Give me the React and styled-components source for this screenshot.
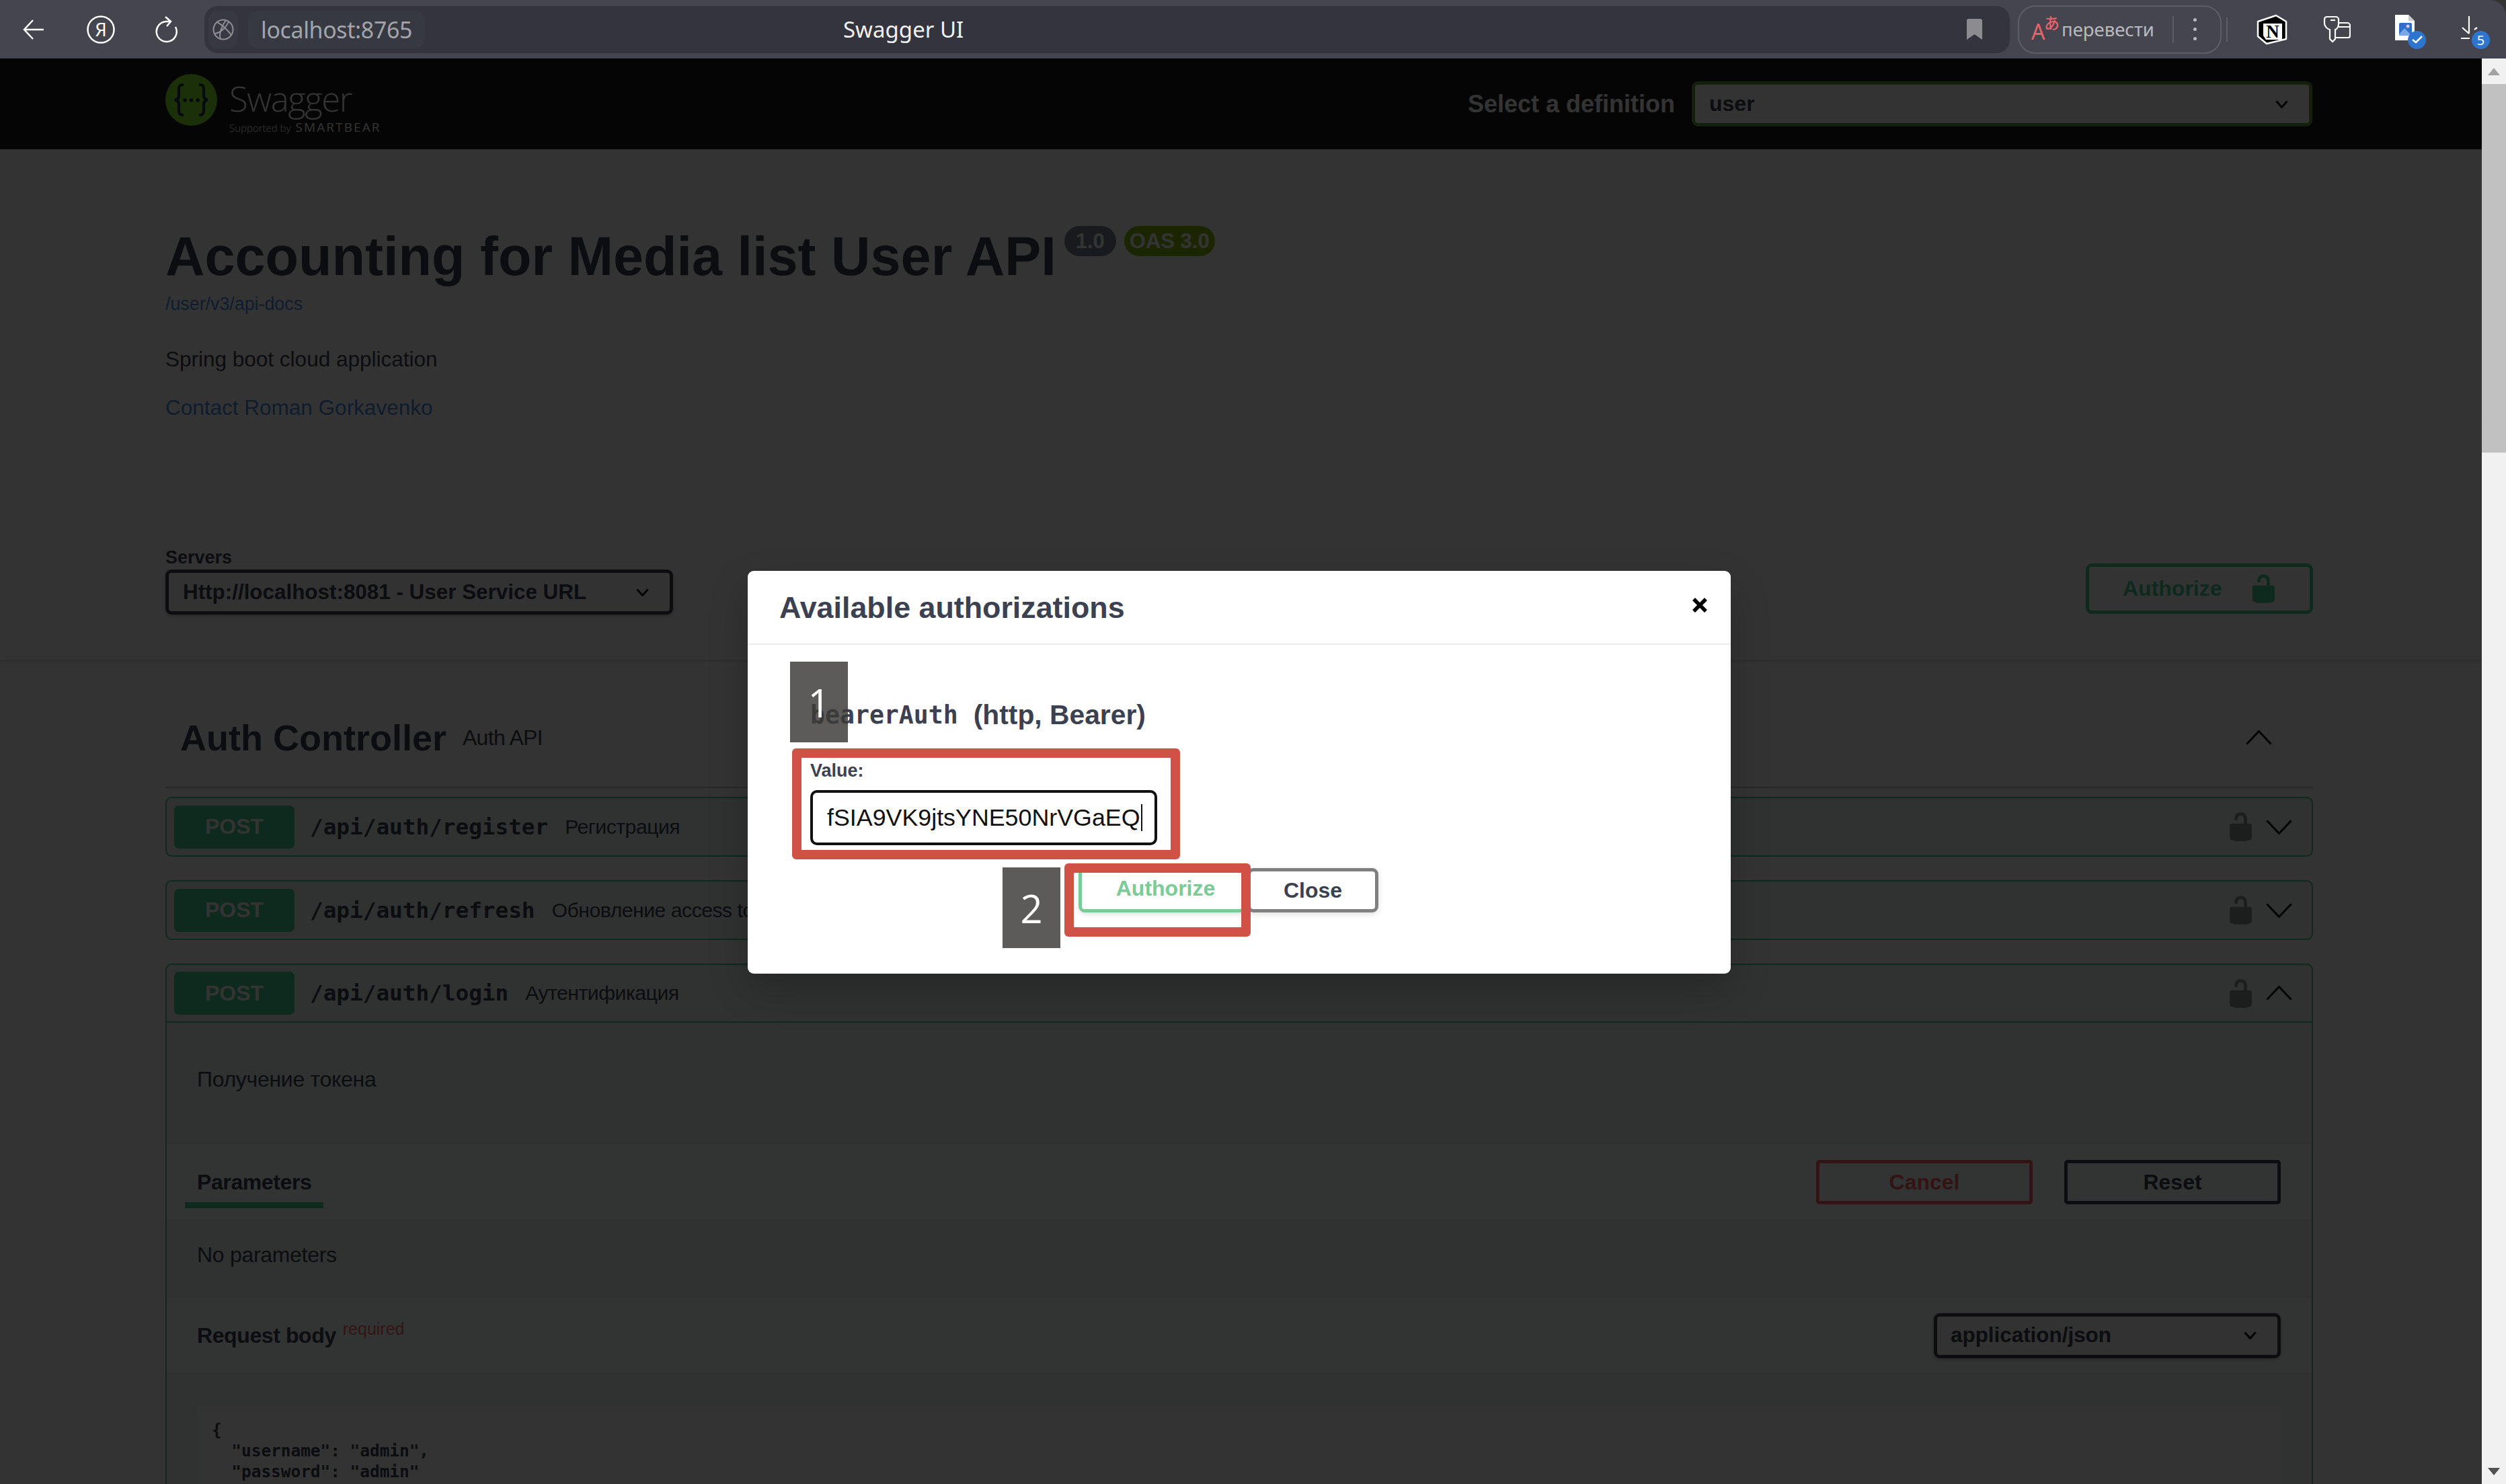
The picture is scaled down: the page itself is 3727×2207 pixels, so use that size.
import React from 'react';
import styled, { createGlobalStyle } from 'styled-components';

const GlobalStyle = createGlobalStyle`
  html, body {
    margin: 0;
    padding: 0;
    background: #333;
    overflow: hidden;
  }
  * {
    box-sizing: border-box;
  }
`;

const SANS = `'Liberation Sans', Arial, sans-serif`;
const MONO = `'DejaVu Sans Mono', monospace`;

const Shell = styled.div`
  width: 3727px;
  height: 2207px;
  display: flex;
  flex-direction: column;
  overflow: hidden;
  font-family: ${SANS};
`;

/* browser chrome */
const Toolbar = styled.header`
  height: 87px;
  flex: none;
  display: flex;
  align-items: center;
  background: #44454f;
  border-top-right-radius: 24px;
  padding: 0 0 0 34px;
`;

const ToolIcon = styled.svg`
  flex: none;
  display: block;
  margin-left: ${(p) => p.$ml || 0}px;
`;

const UrlBar = styled.div`
  width: 2685px;
  height: 70px;
  margin-left: 39px;
  flex: none;
  display: flex;
  align-items: center;
  padding: 0 41px 0 6px;
  background: #33343d;
  border-radius: 20px;
`;

const UrlChip = styled.div`
  height: 56px;
  display: flex;
  align-items: center;
  justify-content: center;
  padding: 0 ${(p) => p.$pad}px;
  margin-left: ${(p) => p.$ml || 0}px;
  background: #373942;
  border-radius: 14px;
`;

const UrlText = styled.span`
  font-family: 'Noto Sans', sans-serif;
  font-size: 33.8px;
  color: #a4a5aa;
  letter-spacing: -0.3px;
`;

const TabTitle = styled.span`
  margin-left: 622px;
  font-family: 'Noto Sans', sans-serif;
  font-size: 33px;
  color: #f1f1f3;
  white-space: nowrap;
`;

const Spacer = styled.div`
  flex: 1;
`;

const TranslateChip = styled.div`
  width: 303px;
  height: 72px;
  margin-left: 12px;
  flex: none;
  display: flex;
  align-items: center;
  padding-left: 18px;
  border: 2px solid #5c5d67;
  border-radius: 26px;
`;

const TranslateMark = styled.div`
  width: 42px;
  height: 38px;
  flex: none;
  display: flex;
  justify-content: space-between;
  color: #e8636b;
  line-height: 1;

  span {
    font-family: 'Noto Sans', sans-serif;
    font-size: 32px;
    align-self: flex-end;
    margin-right: -6px;
  }

  b {
    font-family: 'Noto Sans CJK JP', sans-serif;
    font-size: 23px;
    font-weight: 500;
    align-self: flex-start;
    margin-top: -3px;
  }
`;

const TranslateText = styled.span`
  margin-left: 3px;
  font-family: 'Noto Sans', sans-serif;
  font-size: 27.5px;
  color: #b9babd;
  white-space: nowrap;
`;

const VDivider = styled.div`
  flex: none;
  width: 2px;
  height: ${(p) => p.$h}px;
  margin-left: ${(p) => p.$ml}px;
  background: #5c5d67;
`;

const Kebab = styled.div`
  flex: none;
  margin-left: 29px;
  display: flex;
  flex-direction: column;
  gap: 9px;

  i {
    display: block;
    width: 5px;
    height: 5px;
    border-radius: 50%;
    background: #b9babd;
  }
`;

const IconBadge = styled.span`
  position: absolute;
  left: ${(p) => p.$left}px;
  top: ${(p) => p.$top}px;
  width: 27px;
  height: 27px;
  border-radius: 50%;
  background: #2e75d0;
  color: #fff;
  display: flex;
  align-items: center;
  justify-content: center;
  font-family: 'Noto Sans', sans-serif;
  font-size: 20px;
`;

const BadgeHost = styled.div`
  position: relative;
  flex: none;
  margin-left: ${(p) => p.$ml}px;
  width: ${(p) => p.$w}px;
  height: 44px;
`;

/* page under the dialog */
const Viewport = styled.div`
  flex: 1;
  min-height: 0;
  display: flex;
`;

const Page = styled.main`
  position: relative;
  width: 3691px;
  flex: none;
  overflow: hidden;
  background: #fff;
  color: #3b4151;
`;

const Scrollbar = styled.aside`
  width: 36px;
  flex: none;
  display: flex;
  flex-direction: column;
  background: #f1f1f1;
`;

const ScrollButton = styled.div`
  height: 38px;
  display: flex;
  align-items: center;
  justify-content: center;

  &::before {
    content: '';
    border-left: 9px solid transparent;
    border-right: 9px solid transparent;
    ${(p) => (p.$down ? 'border-top: 11px solid #505050;' : 'border-bottom: 11px solid #a3a3a3;')}
  }
`;

const ScrollThumb = styled.div`
  height: 548px;
  background: #c1c1c1;
`;

const Topbar = styled.div`
  height: 135px;
  display: flex;
  align-items: center;
  padding: 0 252px 0 246px;
  background: #1b1b1b;
`;

const Logo = styled.div`
  display: flex;
  align-items: flex-start;
  gap: 18px;
`;

const LogoWords = styled.div`
  display: flex;
  flex-direction: column;
  color: #fff;
  font-family: 'Open Sans', sans-serif;
`;

const LogoName = styled.span`
  font-size: 51px;
  font-weight: 300;
  line-height: 66px;
  padding-top: 4px;
  letter-spacing: -1.5px;
`;

const LogoSupport = styled.span`
  display: flex;
  align-items: baseline;
  gap: 7px;
  font-size: 15px;
  line-height: 20px;
  font-weight: 300;

  b {
    font-size: 19px;
    font-weight: 400;
    letter-spacing: 2.1px;
  }
`;

const DefinitionPicker = styled.div`
  margin-left: auto;
  display: flex;
  align-items: center;
  gap: 25px;
`;

const DefinitionLabel = styled.span`
  font-size: 36px;
  font-weight: 700;
  color: #fff;
`;

const SelectBox = styled.div`
  width: ${(p) => p.$w}px;
  height: 67px;
  flex: none;
  display: flex;
  align-items: center;
  justify-content: space-between;
  padding: 0 ${(p) => p.$right || 29}px 0 ${(p) => p.$left || 21}px;
  border: 5px solid ${(p) => p.$border || '#41444e'};
  border-radius: 9px;
  background: ${(p) => p.$bg || '#f7f7f7'};
  box-shadow: 0 2px 5px rgba(0, 0, 0, 0.25);
  font-size: ${(p) => p.$size || 31.4}px;
  font-weight: 700;
  color: #3b4151;
  white-space: nowrap;
`;

const Info = styled.section`
  padding: 115px 252px 0 246px;
`;

const Title = styled.h2`
  margin: 0;
  display: flex;
  align-items: flex-start;
  font-size: 81px;
  line-height: 88px;
  font-weight: 700;
  color: #3b4151;
  white-space: nowrap;
`;

const Version = styled.small`
  height: 45px;
  margin: -1px 0 0 ${(p) => p.$ml}px;
  padding: 0 ${(p) => p.$pad}px;
  display: flex;
  align-items: center;
  border-radius: 24px;
  background: ${(p) => p.$bg};
  color: #fff;
  font-size: 31px;
  line-height: 45px;
  font-weight: 700;
`;

const DocsLink = styled.div`
  margin-top: 10px;
  font-size: 26.8px;
  line-height: 34px;
  color: #4990e2;
`;

const Description = styled.p`
  margin: ${(p) => p.$mt}px 0 0;
  font-size: 31.5px;
  line-height: 34px;
  color: ${(p) => p.$color || '#3b4151'};
`;

const SchemeRow = styled.section`
  height: 358px;
  padding: 0 251px 67px 246px;
  display: flex;
  align-items: flex-end;
  justify-content: space-between;
  background: #fff;
  box-shadow: 0 2px 5px rgba(0, 0, 0, 0.15);
`;

const ServersLabel = styled.div`
  font-size: 27px;
  font-weight: 700;
  line-height: 34px;
  margin-bottom: 1px;
`;

const AuthorizeOpen = styled.button`
  width: 338px;
  height: 75px;
  margin-bottom: 1px;
  display: flex;
  align-items: center;
  justify-content: space-between;
  padding: 0 45px 0 50px;
  background: transparent;
  border: 5px solid #49cc90;
  border-radius: 9px;
  color: #49cc90;
  font-family: ${SANS};
  font-size: 32px;
  font-weight: 700;
`;

const Tag = styled.section`
  padding: 0 251px 0 246px;
`;

const TagHeader = styled.div`
  height: 191px;
  padding: 43px 61px 0 22px;
  display: flex;
  align-items: center;
  border-bottom: 2px solid rgba(59, 65, 81, 0.3);
`;

const TagName = styled.h3`
  margin: 0;
  font-size: 54px;
  font-weight: 700;
  color: #3b4151;
`;

const TagNote = styled.span`
  margin-left: 24px;
  font-size: 32px;
  color: #3b4151;
  letter-spacing: -0.7px;
`;

const OpList = styled.div`
  margin-top: 13px;
  display: flex;
  flex-direction: column;
  gap: 35px;
`;

const OpBlock = styled.article`
  border: 2px solid #49cc90;
  border-radius: 9px;
  background: rgba(73, 204, 144, 0.1);
`;

const OpHeader = styled.div`
  height: ${(p) => (p.$open ? 86 : 85)}px;
  display: flex;
  align-items: center;
  padding: 0 29px 0 11px;
  border-bottom: ${(p) => (p.$open ? '2px solid #49cc90' : 'none')};
`;

const Method = styled.span`
  width: 179px;
  height: 64px;
  flex: none;
  display: flex;
  align-items: center;
  justify-content: center;
  border-radius: 7px;
  background: #49cc90;
  color: #fff;
  font-size: 32px;
  font-weight: 700;
`;

const OpPath = styled.span`
  margin-left: 23px;
  font-family: ${MONO};
  font-size: 32.7px;
  font-weight: 700;
  color: #3b4151;
`;

const OpSummary = styled.span`
  margin-left: 25px;
  font-size: 30.2px;
  color: #3b4151;
  letter-spacing: -0.5px;
`;

const OpIcons = styled.div`
  margin-left: auto;
  display: flex;
  align-items: center;
  gap: 14px;
`;

const OpLock = styled.svg`
  width: 47px;
  height: 47px;
  fill: #000;
  opacity: 0.4;
`;

const OpDescription = styled.p`
  height: 181px;
  margin: 0;
  padding: 67px 0 0 45px;
  font-size: 32px;
  line-height: 34px;
  letter-spacing: -0.3px;
`;

const SectionHeader = styled.div`
  height: ${(p) => p.$h}px;
  padding: 0 46px 0 45px;
  display: flex;
  align-items: center;
  justify-content: space-between;
  background: rgba(255, 255, 255, 0.8);
  box-shadow: 0 1px 2px rgba(0, 0, 0, 0.1);
`;

const TabLabel = styled.div`
  position: relative;
  font-size: 32px;
  font-weight: 700;
  letter-spacing: -0.4px;

  &::after {
    content: '';
    position: absolute;
    left: -18px;
    right: -18px;
    top: 48px;
    height: 9px;
    background: #49cc90;
  }
`;

const TryActions = styled.div`
  display: flex;
  gap: 47px;
`;

const ActionButton = styled.button`
  width: 322px;
  height: 66px;
  background: transparent;
  border: 5px solid ${(p) => p.$color};
  border-radius: 5px;
  color: ${(p) => p.$color};
  font-family: ${SANS};
  font-size: 32px;
  font-weight: 700;
`;

const NoParams = styled.p`
  height: 116px;
  margin: 0;
  padding: 35px 0 0 45px;
  font-size: 32px;
  line-height: 34px;
  letter-spacing: -0.3px;
`;

const BodyLabel = styled.div`
  display: flex;
  align-items: flex-start;
  font-size: 32px;
  font-weight: 700;
  letter-spacing: -0.4px;

  small {
    margin: -6px 0 0 10px;
    font-size: 25px;
    font-weight: 400;
    color: rgba(255, 0, 0, 0.6);
    letter-spacing: 0;
  }
`;

const BodyWrap = styled.div`
  padding: 48px 46px 0;
`;

const CodeBlock = styled.pre`
  margin: 0;
  height: 300px;
  padding: 21px 21px;
  border-radius: 5px;
  background: #fff;
  font-family: ${MONO};
  font-size: 24.4px;
  line-height: 31px;
  font-weight: 700;
  color: #3b4151;
`;

/* auth dialog */
const Overlay = styled.div`
  position: absolute;
  inset: 0;
  background: rgba(0, 0, 0, 0.8);
`;

const Modal = styled.div`
  position: absolute;
  left: 1112px;
  top: 762px;
  width: 1462px;
  height: 599px;
  border-radius: 9px;
  background: #fff;
  box-shadow: 0 24px 60px rgba(0, 0, 0, 0.2);
  color: #3b4151;
`;

const ModalHeader = styled.div`
  height: 110px;
  padding: 0 34px 0 47px;
  display: flex;
  align-items: center;
  justify-content: space-between;
  border-bottom: 2px solid #ebebeb;
`;

const ModalTitle = styled.h3`
  margin: 0;
  font-size: 44.8px;
  font-weight: 700;
`;

const CloseIcon = styled.svg`
  margin-bottom: 6px;
`;

const ModalBody = styled.div`
  padding: 82px 0 0 93px;
`;

const SchemeHeading = styled.h4`
  margin: 0;
  height: 44px;
  display: flex;
  align-items: center;
  font-size: 40.8px;
  font-weight: 700;

  code {
    font-family: ${MONO};
    font-size: 36.5px;
    margin-right: 23px;
  }
`;

const ValueLabel = styled.label`
  display: block;
  margin-top: 46px;
  font-size: 27px;
  line-height: 30px;
  font-weight: 700;
`;

const TokenField = styled.div`
  width: 516px;
  height: 82px;
  margin-top: 14px;
  display: flex;
  align-items: center;
  padding-left: 21px;
  border: 4px solid #111;
  border-radius: 10px;
  color: #111;
  font-size: 35.8px;
  white-space: nowrap;

  &::after {
    content: '';
    width: 2px;
    height: 40px;
    margin-left: 1px;
    background: #111;
  }
`;

const AuthActions = styled.div`
  margin: 34px 0 0 399px;
  display: flex;
`;

const DoneButton = styled.button`
  width: ${(p) => p.$w}px;
  height: 66px;
  padding: 0;
  background: #fff;
  border: 5px solid ${(p) => p.$color};
  border-radius: 9px;
  box-shadow: 0 3px 8px rgba(0, 0, 0, 0.12);
  color: ${(p) => p.$text};
  font-family: ${SANS};
  font-size: 32px;
  font-weight: 700;

  span {
    position: relative;
    top: ${(p) => p.$shift || 0}px;
    left: ${(p) => p.$nudge || 0}px;
  }
`;

const StepBadge = styled.div`
  position: absolute;
  left: ${(p) => p.$left}px;
  top: ${(p) => p.$top}px;
  width: 86px;
  height: 120px;
  display: flex;
  align-items: center;
  justify-content: center;
  background: rgba(60, 58, 55, 0.83);
  color: #fff;
  font-family: 'Open Sans', sans-serif;
  font-size: 58px;
`;

const RedFrame = styled.div`
  position: absolute;
  left: ${(p) => p.$left}px;
  top: ${(p) => p.$top}px;
  width: ${(p) => p.$w}px;
  height: ${(p) => p.$h}px;
  border: 14px solid #d05246;
  border-radius: 6px;
`;

const Chevron = ({ up, w = 39, h = 22, sw = 3, color = '#000' }) => (
  <svg width={w} height={h} viewBox={`0 0 ${w} ${h}`} fill="none" style={{ flex: 'none', display: 'block' }}>
    <polyline
      points={up ? `1.5,${h - 1.5} ${w / 2},1.5 ${w - 1.5},${h - 1.5}` : `1.5,1.5 ${w / 2},${h - 1.5} ${w - 1.5},1.5`}
      stroke={color}
      strokeWidth={sw}
    />
  </svg>
);

const UNLOCK =
  'M15.8 8H14V5.6C14 2.703 12.665 1 10 1 7.334 1 6 2.703 6 5.6V6h2v-.801C8 3.754 8.797 3 10 3c1.203 0 2 .754 2 2.199V8H4c-.553 0-1 .646-1 1.199V17c0 .549.428 1.139.951 1.307l1.197.387C5.672 18.861 6.55 19 7.1 19h5.8c.549 0 1.428-.139 1.951-.307l1.196-.387c.524-.167.953-.757.953-1.306V9.199C17 8.646 16.352 8 15.8 8z';

const SwaggerMark = () => (
  <svg width="77" height="77" viewBox="0 0 77 77" style={{ marginTop: 1 }}>
    <circle cx="38.5" cy="38.5" r="38.5" fill="#85ea2d" />
    <g fill="none" stroke="#173647" strokeWidth="4">
      <path d="M27 16c-7 0-7 3-7 8v8c0 4-2 6-6 6.500 4 .5 6 2.500 6 6.500v8c0 5 0 8 7 8" />
      <path d="M50 16c7 0 7 3 7 8v8c0 4 2 6 6 6.500-4 .5-6 2.500-6 6.500v8c0 5 0 8-7 8" />
    </g>
    <g fill="#173647">
      <circle cx="29" cy="39" r="2.800" />
      <circle cx="38.500" cy="39" r="2.800" />
      <circle cx="48" cy="39" r="2.800" />
    </g>
  </svg>
);

const BrowserBar = () => (
  <Toolbar>
    <ToolIcon width="32" height="32" viewBox="0 0 32 32" fill="none" stroke="#fff" strokeWidth="2.500">
      <path d="M31 16H2M15 2 2 16l13 14" />
    </ToolIcon>
    <ToolIcon $ml={63} width="42" height="42" viewBox="0 0 42 42" fill="none">
      <circle cx="21" cy="21" r="19.500" stroke="#fff" strokeWidth="2.500" />
      <text x="21" y="31" textAnchor="middle" fontFamily="'Noto Sans', sans-serif" fontSize="27" fill="#fff">Я</text>
    </ToolIcon>
    <ToolIcon $ml={60} width="34" height="40" viewBox="0 0 34 40" fill="none" stroke="#fff" strokeWidth="2.500">
      <path d="M30 16a15 15 0 1 1-14-8h6M15 1l8 7-6 7" />
    </ToolIcon>
    <UrlBar>
      <UrlChip $pad={6}>
        <svg width="32" height="32" viewBox="0 0 32 32" fill="none" stroke="#8e8f94" strokeWidth="2">
          <circle cx="16" cy="16" r="14.500" />
          <path d="M3 22c8-1 17-8 21-18M7 5c6 3 16 12 21 19M12 30c-3-7 2-20 8-28" />
        </svg>
      </UrlChip>
      <UrlChip $pad={19} $ml={15}>
        <UrlText>localhost:8765</UrlText>
      </UrlChip>
      <TabTitle>Swagger UI</TabTitle>
      <Spacer />
      <svg width="23" height="31" viewBox="0 0 23 31">
        <path d="M3 0h17a3 3 0 0 1 3 3v28l-11.500-8L0 31V3a3 3 0 0 1 3-3z" fill="#8b8b90" />
      </svg>
    </UrlBar>
    <TranslateChip>
      <TranslateMark>
        <span>A</span>
        <b>あ</b>
      </TranslateMark>
      <TranslateText>перевести</TranslateText>
      <VDivider $h={40} $ml={27} />
      <Kebab><i /><i /><i /></Kebab>
    </TranslateChip>
    <VDivider $h={36} $ml={7} />
    <ToolIcon $ml={43} width="46" height="46" viewBox="0 0 46 46">
      <path d="M2 11 29 2l15 9v26l-29 7-13-11z" fill="#000" stroke="#fff" strokeWidth="2.500" strokeLinejoin="round" />
      <path d="M10 14h28v24H14l-4-6z" fill="#fff" />
      <text x="24" y="35" textAnchor="middle" fontFamily="'Liberation Serif', serif" fontWeight="700" fontSize="27" fill="#000">N</text>
    </ToolIcon>
    <ToolIcon $ml={52} width="42" height="42" viewBox="0 0 42 42" fill="none" stroke="#fff" strokeWidth="2.200">
      <path d="M6 2h14a4 4 0 0 1 4 4v6c0 4-2 8-5 9v14l-4 4-4-4V21c-4-1-8-5-8-9V6a4 4 0 0 1 3-4z" />
      <path d="M12 7h7" />
      <path d="M24 11h13a4 4 0 0 1 4 4v15a3 3 0 0 1-3 3H20M24 17h17" />
    </ToolIcon>
    <BadgeHost $ml={66} $w={32}>
      <svg width="30" height="38" viewBox="0 0 30 38">
        <path d="M0 0h20l9 9v29H0z" fill="#fff" />
        <path d="M20 0v9h9z" fill="#c8c8cc" />
        <rect x="6" y="12" width="19" height="19" rx="2" fill="#2f6fc9" />
        <path d="M6 29l8-9 8 8v3H6z" fill="#79a7e8" />
        <circle cx="19" cy="17" r="2.500" fill="#d9c6f2" />
      </svg>
      <IconBadge $left={19} $top={24}>
        <svg width="16" height="12" viewBox="0 0 16 12" fill="none" stroke="#fff" strokeWidth="2.500">
          <path d="M1 6l5 4 9-9" />
        </svg>
      </IconBadge>
    </BadgeHost>
    <BadgeHost $ml={65} $w={30}>
      <svg width="26" height="36" viewBox="0 0 26 36" fill="none" stroke="#fff" strokeWidth="2.200" style={{ marginTop: 2 }}>
        <path d="M13 0v26M3 17l10 9M1 33h13M21 20l4-3" />
      </svg>
      <IconBadge $left={17} $top={24}>5</IconBadge>
    </BadgeHost>
  </Toolbar>
);

const ops = [
  { path: '/api/auth/register', summary: 'Регистрация' },
  { path: '/api/auth/refresh', summary: 'Обновление access token' },
];

const OpRow = ({ path, summary, open }) => (
  <OpHeader $open={open}>
    <Method>POST</Method>
    <OpPath>{path}</OpPath>
    <OpSummary>{summary}</OpSummary>
    <OpIcons>
      <OpLock viewBox="0 0 20 20"><path d={UNLOCK} /></OpLock>
      <Chevron up={open} />
    </OpIcons>
  </OpHeader>
);

const App = () => {
  return (
    <Shell>
      <GlobalStyle />
      <BrowserBar />
      <Viewport>
        <Page>
          <Topbar>
            <Logo>
              <SwaggerMark />
              <LogoWords>
                <LogoName>Swagger</LogoName>
                <LogoSupport>Supported by <b>SMARTBEAR</b></LogoSupport>
              </LogoWords>
            </Logo>
            <DefinitionPicker>
              <DefinitionLabel>Select a definition</DefinitionLabel>
              <SelectBox $w={923} $border="#62a03f" $bg="#fff" $size={32} $right={31}>
                user
                <Chevron w={19} h={12} />
              </SelectBox>
            </DefinitionPicker>
          </Topbar>

          <Info>
            <Title>
              Accounting for Media list User API
              <Version $ml={12} $pad={17} $bg="#7d8492">1.0</Version>
              <Version $ml={12} $pad={8} $bg="#89bf04">OAS 3.0</Version>
            </Title>
            <DocsLink>/user/v3/api-docs</DocsLink>
            <Description $mt={48}>Spring boot cloud application</Description>
            <Description $mt={38} $color="#4990e2">Contact Roman Gorkavenko</Description>
          </Info>

          <SchemeRow>
            <div>
              <ServersLabel>Servers</ServersLabel>
              <SelectBox $w={755} $left={21} $right={31}>
                Http://localhost:8081 - User Service URL
                <Chevron w={19} h={12} />
              </SelectBox>
            </div>
            <AuthorizeOpen>
              Authorize
              <svg width="47" height="47" viewBox="0 0 20 20" fill="#49cc90"><path d={UNLOCK} /></svg>
            </AuthorizeOpen>
          </SchemeRow>

          <Tag>
            <TagHeader>
              <TagName>Auth Controller</TagName>
              <TagNote>Auth API</TagNote>
              <OpIcons>
                <Chevron up />
              </OpIcons>
            </TagHeader>
            <OpList>
              {ops.map((op) => (
                <OpBlock key={op.path}>
                  <OpRow path={op.path} summary={op.summary} />
                </OpBlock>
              ))}
              <OpBlock>
                <OpRow path="/api/auth/login" summary="Аутентификация" open />
                <OpDescription>Получение токена</OpDescription>
                <SectionHeader $h={112}>
                  <TabLabel>Parameters</TabLabel>
                  <TryActions>
                    <ActionButton $color="#ff6060">Cancel</ActionButton>
                    <ActionButton $color="#3b4151">Reset</ActionButton>
                  </TryActions>
                </SectionHeader>
                <NoParams>No parameters</NoParams>
                <SectionHeader $h={112}>
                  <BodyLabel>Request body <small>required</small></BodyLabel>
                  <SelectBox $w={516} $left={20} $right={31}>
                    application/json
                    <Chevron w={19} h={12} />
                  </SelectBox>
                </SectionHeader>
                <BodyWrap>
                  <CodeBlock>{`{
  "username": "admin",
  "password": "admin"
}`}</CodeBlock>
                </BodyWrap>
              </OpBlock>
            </OpList>
          </Tag>

          <Overlay>
            <Modal>
              <ModalHeader>
                <ModalTitle>Available authorizations</ModalTitle>
                <CloseIcon width="24" height="24" viewBox="0 0 24 24" fill="none" stroke="#000" strokeWidth="5.500">
                  <path d="M3 3l18 18M21 3 3 21" />
                </CloseIcon>
              </ModalHeader>
              <ModalBody>
                <SchemeHeading><code>bearerAuth</code>(http, Bearer)</SchemeHeading>
                <ValueLabel>Value:</ValueLabel>
                <TokenField>fSIA9VK9jtsYNE50NrVGaEQ</TokenField>
                <AuthActions>
                  <DoneButton $w={251} $color="#7acb95" $text="#7acb95" $shift={-3} $nudge={4}>
                    <span>Authorize</span>
                  </DoneButton>
                  <DoneButton $w={195} $color="#808080" $text="#3b4151">
                    <span>Close</span>
                  </DoneButton>
                </AuthActions>
              </ModalBody>
              <StepBadge $left={63} $top={135}>1</StepBadge>
              <StepBadge $left={379} $top={441}>2</StepBadge>
              <RedFrame $left={66} $top={264} $w={577} $h={165} />
              <RedFrame $left={471} $top={435} $w={277} $h={109} />
            </Modal>
          </Overlay>
        </Page>
        <Scrollbar>
          <ScrollButton />
          <ScrollThumb />
          <Spacer />
          <ScrollButton $down />
        </Scrollbar>
      </Viewport>
    </Shell>
  );
};

export default App;
